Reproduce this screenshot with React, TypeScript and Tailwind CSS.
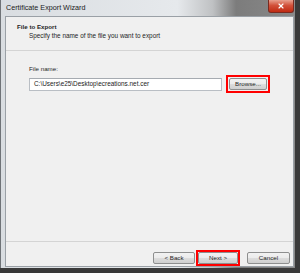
import { X } from 'lucide-react';

// Win7-style wizard dialog, scaled down screenshot
export default function App() {
  return (
    <div className="flex h-[273px] w-[300px] flex-col overflow-hidden bg-[#3a3a3a] font-['Liberation_Sans',sans-serif] text-[#1e1e1e]">
      <div className="flex flex-1 flex-col border-l border-[#6f7377] bg-[linear-gradient(90deg,#d9dde1_0%,#e6e9ec_60%,#bfc1c3_72%,#7c7c7c_80%,#8a8a8a_100%)] mr-[5px] mb-[5px]">
        <TitleBar />
        <div className="ml-[4px] mr-[1px] mb-[1px] flex flex-1 flex-col border border-[#9aa0a6] bg-[#f0f0f0]">
          <Header />
          <Body />
          <Footer />
        </div>
      </div>
    </div>
  );
}

function TitleBar() {
  return (
    <div className="flex h-[16px] items-start">
      <span className="pl-[5px] pt-[4px] text-[7.2px] leading-none text-[#1a1a1a]">Certificate Export Wizard</span>
      <div className="ml-auto mr-[1px] flex h-[13px] w-[26px] items-center justify-center rounded-b-[3px] border border-t-0 border-[#7a2a20] bg-[linear-gradient(180deg,#e8a08e_0%,#d2513a_45%,#c02a12_100%)]">
        <X size={8} strokeWidth={3.5} className="text-white" />
      </div>
    </div>
  );
}

function Header() {
  return (
    <div className="flex h-[34px] flex-col border-b border-[#d4d4d4] pl-[11px] pt-[7px]">
      <span className="text-[6.2px] font-bold leading-none">File to Export</span>
      <span className="pl-[12px] pt-[3px] text-[6.4px] leading-none">Specify the name of the file you want to export</span>
    </div>
  );
}

function Body() {
  return (
    <div className="flex flex-1 flex-col pl-[23px] pt-[15px]">
      <span className="text-[6.2px] leading-none">File name:</span>
      <div className="mt-[3px] flex items-center">
        <div className="flex h-[13px] w-[193px] items-center border border-[#b9bec4] border-t-[#a6abb1] bg-white pl-[4px] text-[6.4px] text-[#222]">
          C:\Users\e25\Desktop\ecreations.net.cer
        </div>
        <div className="ml-[4px] border-2 border-[#ff0000] p-[1px]">
          <Btn label="Browse..." w="w-[38px]" />
        </div>
      </div>
    </div>
  );
}

function Footer() {
  return (
    <div className="flex h-[25px] items-start border-t border-[#d4d4d4] pr-[3px] pt-[8px]">
      <div className="ml-auto flex items-center">
        <Btn label="< Back" w="w-[42px]" />
        <div className="ml-[1px] border-2 border-[#ff0000]">
          <Btn label="Next >" w="w-[40px]" />
        </div>
        <div className="ml-[7px]">
          <Btn label="Cancel" w="w-[43px]" />
        </div>
      </div>
    </div>
  );
}

function Btn({ label, w }: { label: string; w: string }) {
  return (
    <div
      className={`${w} flex h-[12px] items-center justify-center rounded-[2px] border border-[#8e8f8f] bg-[linear-gradient(180deg,#f2f2f2_0%,#ebebeb_50%,#dddddd_51%,#cfcfcf_100%)] text-[6.2px] leading-none text-[#1e1e1e]`}
    >
      {label}
    </div>
  );
}
